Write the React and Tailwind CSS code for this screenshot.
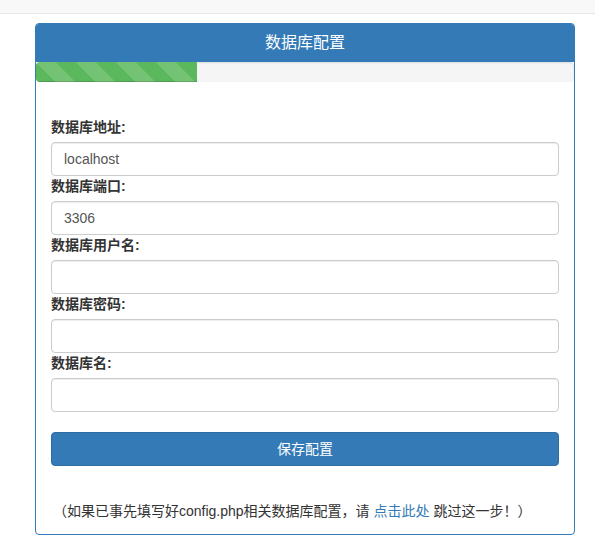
import { useState } from "react";

const fields = [
  { label: "数据库地址:", value: "localhost" },
  { label: "数据库端口:", value: "3306" },
  { label: "数据库用户名:", value: "" },
  { label: "数据库密码:", value: "" },
  { label: "数据库名:", value: "" },
];

export default function App() {
  const [values, setValues] = useState(fields.map((f) => f.value));

  return (
    <div className="min-h-screen bg-white font-['Liberation_Sans','Noto_Sans_CJK_SC',sans-serif] text-sm text-[#333]">
      {/* navbar stub */}
      <div className="h-[14px] bg-[#f8f8f8] border-b border-[#e7e7e7]" />

      <div className="ml-[35px] mt-[9px] w-[540px] border border-[#337ab7] rounded-[4px] overflow-hidden">
        <div className="h-[38px] bg-[#337ab7] flex items-center justify-center text-white text-base">
          数据库配置
        </div>

        <div className="h-[20px] bg-[#f5f5f5] rounded-[4px] shadow-[inset_0_1px_2px_rgba(0,0,0,.1)] overflow-hidden">
          <div className="h-full w-[30%] bg-[#5cb85c] bg-[linear-gradient(45deg,rgba(255,255,255,.15)_25%,transparent_25%,transparent_50%,rgba(255,255,255,.15)_50%,rgba(255,255,255,.15)_75%,transparent_75%,transparent)] bg-[length:40px_40px] shadow-[inset_0_-1px_0_rgba(0,0,0,.15)]" />
        </div>

        <div className="px-[15px] pt-[35px] pb-[13px]">
          {fields.map((f, i) => (
            <div key={f.label}>
              <label className="block font-bold leading-5 mb-[5px]">
                {f.label}
              </label>
              <input
                type="text"
                value={values[i]}
                onChange={(e) =>
                  setValues((prev) =>
                    prev.map((v, j) => (j === i ? e.target.value : v))
                  )
                }
                className="block w-full h-[34px] px-3 border border-[#ccc] rounded-[4px] text-[#555] leading-5 shadow-[inset_0_1px_1px_rgba(0,0,0,.075)] outline-none"
              />
            </div>
          ))}

          <button
            type="button"
            className="mt-5 w-full h-[34px] bg-[#337ab7] border border-[#2e6da4] rounded-[4px] text-white"
          >
            保存配置
          </button>

          <p className="mt-[35px] leading-5 pl-[2px]">
            （如果已事先填写好config.php相关数据库配置，请{" "}
            <a href="#" className="text-[#337ab7]">
              点击此处
            </a>{" "}
            跳过这一步！）
          </p>
        </div>
      </div>
    </div>
  );
}
